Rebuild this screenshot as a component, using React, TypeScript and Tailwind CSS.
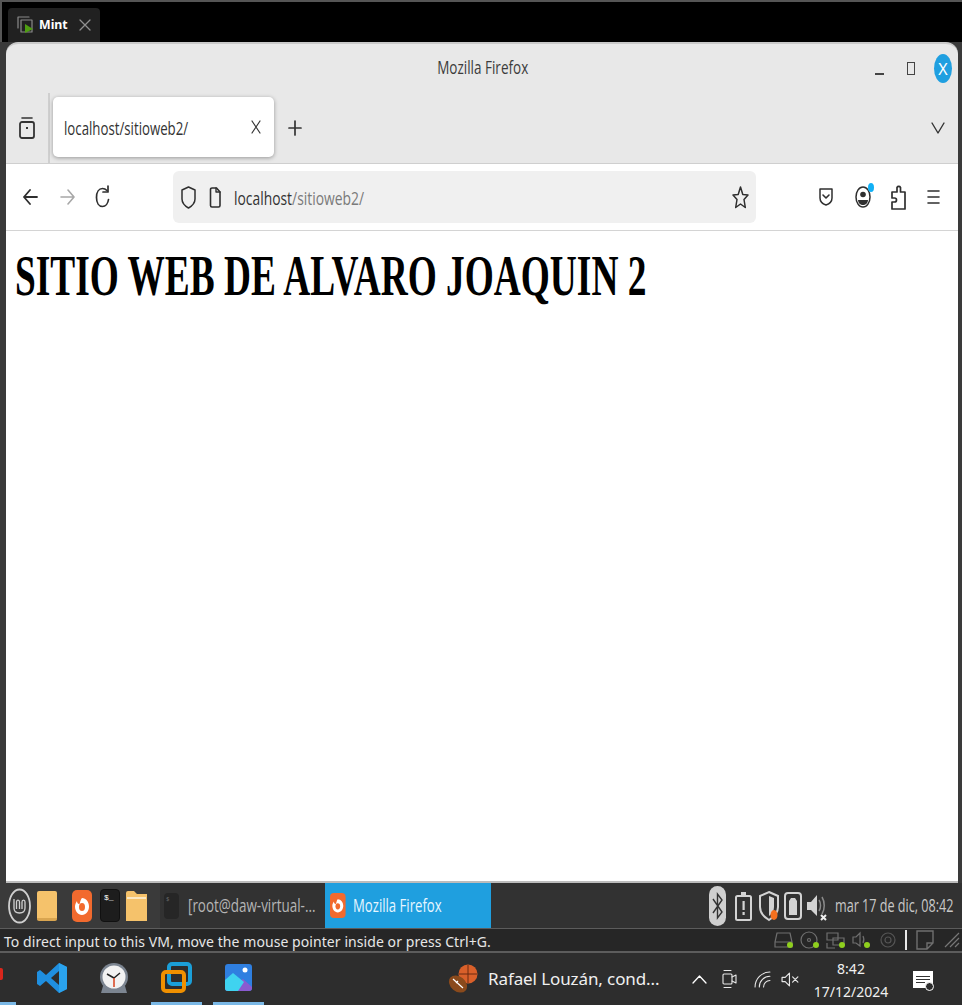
import type { ReactNode } from "react";

const ui = "font-['Open_Sans','Noto_Sans',sans-serif]";

function Icon({ w, h, box, children, className = "" }: { w: number; h: number; box: string; children: ReactNode; className?: string }) {
  return (
    <svg width={w} height={h} viewBox={box} fill="none" stroke="currentColor" strokeWidth="1.6" strokeLinecap="round" strokeLinejoin="round" className={`shrink-0 ${className}`}>
      {children}
    </svg>
  );
}

function TopStrip() {
  return (
    <div className="h-[42px] shrink-0 bg-black border-t-2 border-l-2 border-[#555] pl-[6px] pt-[6px] flex items-start">
      <div className="w-[92px] h-[34px] bg-[#212121] rounded-t-[4px] flex items-center pl-[7px]">
        <Icon w={20} h={20} box="0 0 20 20" className="text-[#8a8a8a]">
          <path d="M3 13V2h11M6 17V5h11v12z" strokeWidth="1.2" />
          <path d="M10 9v9l8-4z" fill="#4f9e12" stroke="none" />
        </Icon>
        <span className="ml-[4px] text-white text-[13px] font-bold font-['Noto_Sans',sans-serif] scale-x-[0.95] origin-left">Mint</span>
        <span className="ml-[9px] text-[#8f8f8f]">
          <Icon w={14} h={14} box="0 0 14 14"><path d="M2 2l10 10M12 2L2 12" strokeWidth="1.3" /></Icon>
        </span>
      </div>
    </div>
  );
}

function TitleBar() {
  return (
    <div className="h-[49px] shrink-0 flex items-center relative">
      <div className={`flex-1 text-center text-[#3c3c3c] text-[18px] pl-[84px] pb-[3px] ${ui}`}>
        <span className="inline-block scale-x-[0.75]">Mozilla Firefox</span>
      </div>
      <div className="flex items-center pr-[6px] text-[#3c3c3c]">
        <div className="w-[9px] h-[2px] bg-[#444] mt-[10px]" />
        <div className="w-[8px] h-[13px] border-[1.5px] border-[#444] ml-[23px]" />
        <div className="w-[18px] h-[29px] rounded-[50%] bg-[#1f9fe0] ml-[19px] flex items-center justify-center text-white text-[16px] font-['Noto_Sans',sans-serif]">X</div>
      </div>
    </div>
  );
}

function TabStrip() {
  return (
    <div className="h-[71px] shrink-0 flex items-center border-b border-[#cfcfcf] text-[#333]">
      <div className="w-[44px] h-full border-r-2 border-[#cfcfcf] flex items-center justify-center">
        <Icon w={18} h={26} box="0 0 18 26" className="ml-[0px]">
          <rect x="2" y="7" width="14" height="16" rx="2" strokeWidth="1.8" />
          <path d="M4 3h10" strokeWidth="1.6" />
          <rect x="8" y="12" width="2" height="2" fill="currentColor" stroke="none" />
        </Icon>
      </div>
      <div className="ml-[3px] w-[221px] h-[60px] -mt-[2px] bg-white rounded-[5px] shadow-[0_1px_4px_rgba(0,0,0,0.35)] flex items-center pl-[11px] pr-[13px] justify-between">
        <span className={`text-[18px] text-[#333] origin-left scale-x-[0.735] whitespace-nowrap pt-[2px] ${ui}`}>localhost/sitioweb2/</span>
        <Icon w={10} h={14} box="0 0 10 14"><path d="M1 1l8 12M9 1L1 13" strokeWidth="1.2" /></Icon>
      </div>
      <span className="ml-[14px]">
        <Icon w={14} h={16} box="0 0 14 16"><path d="M7 1v14M1 8h12" strokeWidth="1.7" /></Icon>
      </span>
      <span className="ml-auto mr-[13px]">
        <Icon w={14} h={12} box="0 0 14 12"><path d="M1 1l6 10 6-10" strokeWidth="1.4" /></Icon>
      </span>
    </div>
  );
}

function NavBar() {
  return (
    <div className="h-[67px] shrink-0 bg-white border-b border-[#d4d4d4] flex items-center text-[#2f2f2f]">
      <span className="ml-[17px]">
        <Icon w={15} h={16} box="0 0 15 16"><path d="M7 1L1 8l6 7M1 8h13" strokeWidth="1.8" /></Icon>
      </span>
      <span className="ml-[22px] text-[#a8a8a8]">
        <Icon w={15} h={16} box="0 0 15 16"><path d="M8 1l6 7-6 7M14 8H1" strokeWidth="1.6" /></Icon>
      </span>
      <span className="ml-[20px]">
        <Icon w={15} h={24} box="0 0 15 24"><path d="M12 5.500C10.500 4 9.500 3.500 7.500 3.500 4 3.500 1.500 7 1.500 12.500s2.500 9 6 9c3 0 5.500-3 6-7" strokeWidth="1.7" /><path d="M13 1v6H8" strokeWidth="1.7" /></Icon>
      </span>
      <div className="ml-[63px] w-[583px] h-[52px] bg-[#f0f0f0] rounded-[6px] flex items-center pl-[8px] pr-[7px]">
        <Icon w={15} h={25} box="0 0 15 25"><path d="M7.500 2L14 5v9c0 4-3 7-6.500 9C4 21 1 18 1 14V5z" strokeWidth="1.5" /></Icon>
        <span className="ml-[13px]">
          <Icon w={12} h={21} box="0 0 12 21"><path d="M1.500 2.500a1.500 1.500 0 011.500-1.500h4.500L11 5v13.500a1.500 1.500 0 01-1.500 1.500H3a1.500 1.500 0 01-1.500-1.500z" strokeWidth="1.6" /><path d="M7 1v4h4" strokeWidth="1.400" /></Icon>
        </span>
        <span className={`ml-[13px] text-[18px] origin-left scale-x-[0.77] whitespace-nowrap pt-[2px] ${ui}`}>
          <span className="text-[#333]">localhost</span>
          <span className="text-[#7a7a7a]">/sitioweb2/</span>
        </span>
        <span className="ml-auto">
          <Icon w={17} h={25} box="0 0 17 25"><path d="M8.500 2l2.300 7.500 5.200.5-4 4.500 1.300 8-4.800-3.500L3.700 22.500l1.300-8-4-4.500 5.200-.5z" strokeWidth="1.500" /></Icon>
        </span>
      </div>
      <span className="ml-[63px]">
        <Icon w={14} h={20} box="0 0 14 20"><path d="M1 2h12v9c0 4-3 6-6 7-3-1-6-3-6-7z" strokeWidth="1.500" /><path d="M4 8l3 3 3-3" strokeWidth="1.600" /></Icon>
      </span>
      <span className="ml-[22px] relative">
        <Icon w={16} h={22} box="0 0 16 22"><ellipse cx="8" cy="11" rx="7" ry="10" strokeWidth="1.500" /><circle cx="8" cy="8.500" r="2.800" fill="currentColor" stroke="none" /><path d="M3 14h10c0 3-2.500 5-5 5s-5-2-5-5z" fill="currentColor" stroke="none" /></Icon>
        <span className="absolute -top-[3px] right-[-3px] w-[6px] h-[9px] rounded-[50%] bg-[#12b0f5]" />
      </span>
      <span className="ml-[20px]">
        <Icon w={15} h={27} box="0 0 15 27"><path d="M5 25h9V8H9.500V3.500a2 2 0 00-3.500 0V8H1v6h2.500a2 2 0 010 4H1v7z" strokeWidth="1.700" /></Icon>
      </span>
      <span className="ml-[21px]">
        <Icon w={13} h={16} box="0 0 13 16"><path d="M1 2h11M1 8h11M1 14h11" strokeWidth="1.600" /></Icon>
      </span>
    </div>
  );
}

function Browser() {
  return (
    <div className="ml-[6px] mr-[4px] flex-1 min-h-0 flex flex-col bg-[#e8e8e8] rounded-t-[12px] border-t-2 border-[#c9c9c9] overflow-hidden">
      <TitleBar />
      <TabStrip />
      <NavBar />
      <div className="flex-1 bg-white border-b-2 border-[#bcbcbc]">
        <h1 className="ml-[9px] mt-[9px] text-[56px] leading-[72px] font-bold text-black font-['Liberation_Serif',serif] origin-left scale-x-[0.667] whitespace-nowrap">SITIO WEB DE ALVARO JOAQUIN 2</h1>
      </div>
    </div>
  );
}

function FirefoxLogo({ size = 1 }: { size?: number }) {
  return (
    <svg width={20 * size} height={32 * size} viewBox="0 0 20 32" className="shrink-0">
      <rect x="0" y="0" width="20" height="32" rx="5" fill="#f26a2e" />
      <path d="M10 8c4 0 7 4 7 8.500S14 25 10 25s-7-4-7-8.500c0-2 1-4 2-5.500 0 2 1 3 2 3 1 1 1-4 3-6z" fill="#fff" />
      <ellipse cx="10" cy="17" rx="3" ry="4" fill="#f26a2e" />
    </svg>
  );
}

function TrayIcons() {
  return (
    <div className="ml-auto flex items-center text-[#d3d3d3] pr-[7px]">
      <svg width="17" height="40" viewBox="0 0 17 40" className="shrink-0">
        <rect width="17" height="40" rx="8.500" fill="#cfcfcf" />
        <path d="M4 13l9 13-4.500 6V8l4.500 6-9 13" fill="none" stroke="#333" strokeWidth="1.400" />
      </svg>
      <svg width="17" height="30" viewBox="0 0 17 30" className="ml-[9px] shrink-0">
        <rect x="1" y="5" width="15" height="24" rx="1.500" fill="none" stroke="#d3d3d3" strokeWidth="2" />
        <rect x="6" y="1" width="5" height="4" fill="#d3d3d3" />
        <rect x="7.500" y="10" width="2.200" height="9" fill="#d3d3d3" />
        <rect x="7.500" y="21" width="2.200" height="3" fill="#d3d3d3" />
      </svg>
      <svg width="20" height="32" viewBox="0 0 20 32" className="ml-[7px] shrink-0">
        <path d="M10 2l9 4v11c0 6-4 10-9 13-5-3-9-7-9-13V6z" fill="none" stroke="#d3d3d3" strokeWidth="2" />
        <path d="M10 6l5 2v9c0 4-2 7-5 9z" fill="#d3d3d3" />
        <ellipse cx="15" cy="25" rx="3.500" ry="5" fill="#f4701f" />
      </svg>
      <svg width="18" height="28" viewBox="0 0 18 28" className="ml-[5px] shrink-0">
        <rect x="1" y="1" width="16" height="26" rx="3" fill="none" stroke="#d3d3d3" strokeWidth="2" />
        <path d="M5 9l2-3h4l2 3v14H5z" fill="#d3d3d3" />
      </svg>
      <svg width="21" height="30" viewBox="0 0 21 30" className="ml-[4px] shrink-0">
        <path d="M1 11h4l6-7v21l-6-6H1z" fill="#d3d3d3" />
        <path d="M13 9c2 3 2 8 0 11M16 6c3 5 3 12 0 17" fill="none" stroke="#8a8a8a" strokeWidth="1.500" />
        <path d="M15 24l5 5M20 24l-5 5" stroke="#eee" strokeWidth="2" />
      </svg>
      <span className={`ml-[8px] text-[18px] w-[120px] origin-left scale-x-[0.7] whitespace-nowrap text-[#c8c8c8] ${ui}`}>mar 17 de dic, 08:42</span>
    </div>
  );
}

function MintPanel() {
  return (
    <div className="h-[45px] shrink-0 bg-[#323232] flex items-center">
      <div className="w-[160px] h-full bg-[#3a3a3a] flex items-center pl-[8px]">
        <svg width="23" height="36" viewBox="0 0 23 36" className="shrink-0">
          <ellipse cx="11.500" cy="18" rx="10.500" ry="16.500" fill="none" stroke="#cfcfcf" strokeWidth="1.800" />
          <path d="M6 11v9c0 3 2 5 5.500 5s5.500-2 5.500-5v-6c0-2.500-3-2.500-3 0v7M11.500 21v-7c0-2.500-3-2.500-3 0v7" fill="none" stroke="#cfcfcf" strokeWidth="1.300" />
        </svg>
        <div className="ml-[6px] w-[20px] h-[30px] rounded-[2px] bg-[#f5c26b] border-b-[3px] border-[#d9a550]" />
        <div className="ml-[15px]"><FirefoxLogo /></div>
        <div className="ml-[8px] w-[20px] h-[33px] rounded-[4px] bg-[#1d1d1d] border border-[#111] text-white text-[8px] pl-[3px] pt-[2px] font-['Liberation_Mono',monospace]">$_</div>
        <svg width="21" height="30" viewBox="0 0 21 30" className="ml-[6px] shrink-0">
          <path d="M0 2a2 2 0 012-2h6l3 3h10v27H0z" fill="#f5c26b" />
          <rect x="1" y="6" width="19" height="2" fill="#fbe7c2" />
        </svg>
      </div>
      <div className="w-[165px] h-full flex items-center pl-[4px]">
        <div className="shrink-0 w-[15px] h-[26px] rounded-[4px] bg-[#262626] text-[#666] text-[6px] pl-[2px] pt-[2px]">$</div>
        <span className={`ml-[9px] text-[18px] origin-left scale-x-[0.745] whitespace-nowrap text-[#b5b5b5] ${ui}`}>[root@daw-virtual-...</span>
      </div>
      <div className="w-[166px] h-full bg-[#1f9fdf] flex items-center pl-[5px]">
        <FirefoxLogo size={0.78} />
        <span className={`ml-[7px] text-[18px] origin-left scale-x-[0.73] whitespace-nowrap text-[#e6f6ff] ${ui}`}>Mozilla Firefox</span>
      </div>
      <TrayIcons />
    </div>
  );
}

function Led({ children, box = "0 0 20 18" }: { children: ReactNode; box?: string }) {
  return (
    <svg width="20" height="18" viewBox={box} fill="none" stroke="#6f6f6f" strokeWidth="1.200" className="shrink-0 ml-[6px]">
      {children}
    </svg>
  );
}

function StatusBar() {
  return (
    <div className="h-[25px] shrink-0 bg-[#262626] border-t border-b-2 border-[#5c5c5c] flex items-center pl-[4px] pr-[2px]">
      <span className="text-[14px] text-[#e6e6e6] whitespace-nowrap font-['Noto_Sans',sans-serif] tracking-[0.07px] pt-[3px]">To direct input to this VM, move the mouse pointer inside or press Ctrl+G.</span>
      <div className="ml-auto flex items-center">
        <Led>
          <path d="M3 2h13l2 9v5H1v-5zM1 11h17" />
          <circle cx="16" cy="14" r="3" fill="#8fcf1e" stroke="none" />
        </Led>
        <Led>
          <circle cx="9" cy="9" r="8" /><circle cx="9" cy="9" r="1.500" />
          <circle cx="16" cy="14" r="3" fill="#8fcf1e" stroke="none" />
        </Led>
        <Led>
          <path d="M1 2h11v7H1zM7 7h11v7H7zM1 12v5h8" />
          <circle cx="16" cy="14" r="3" fill="#8fcf1e" stroke="none" />
        </Led>
        <Led>
          <path d="M1 6h3l4-4v13l-4-3H1zM11 5c1 2 1 5 0 7" />
          <circle cx="15" cy="14" r="3" fill="#8fcf1e" stroke="none" />
        </Led>
        <Led>
          <circle cx="10" cy="9" r="7" stroke="#555" /><circle cx="10" cy="9" r="3" stroke="#555" />
        </Led>
        <div className="ml-[7px] w-[2px] h-[20px] bg-[#e8e8e8]" />
        <svg width="18" height="20" viewBox="0 0 18 20" fill="none" stroke="#6f6f6f" strokeWidth="1.400" className="ml-[9px] shrink-0">
          <path d="M1 1h16v12l-6 6H1zM17 13h-6v6" />
        </svg>
        <svg width="16" height="16" viewBox="0 0 16 16" stroke="#777" strokeWidth="1.200" className="ml-[10px] shrink-0">
          <path d="M15 1L1 15M15 6L6 15M15 11l-4 4" />
        </svg>
      </div>
    </div>
  );
}

function TaskbarSlot({ active, w, children }: { active?: boolean; w: number; children?: ReactNode }) {
  return (
    <div style={{ width: w }} className={`h-full flex items-center justify-center border-b-[3px] ${active ? "border-[#7ab8e6]" : "border-transparent"}`}>
      {children}
    </div>
  );
}

function WinTaskbar() {
  return (
    <div className="flex-1 bg-[#2d2d2d] flex items-center text-white">
      <div className="h-full w-[16px] border-b-[3px] border-[#7ab8e6] overflow-hidden">
        <div className="w-[3px] h-[12px] bg-[#d9261c] mt-[15px] rounded-r-[2px]" />
      </div>
      <TaskbarSlot w={72}>
        <svg width="32" height="32" viewBox="0 0 32 32">
          <path d="M23 1l8 4v22l-8 4-13-12-6 5-3-2v-12l3-2 6 5z" fill="#1f8fe0" />
          <path d="M23 9l-8 7 8 7z" fill="#2d2d2d" />
          <path d="M23 1l8 4v22l-8 4z" fill="#2aa3ee" />
        </svg>
      </TaskbarSlot>
      <TaskbarSlot w={51}>
        <svg width="30" height="32" viewBox="0 0 30 32">
          <path d="M2 31l2-7h22l2 7z" fill="#7c8591" />
          <circle cx="15" cy="15" r="14" fill="#7c8591" />
          <circle cx="15" cy="15" r="11.500" fill="#f2f2f2" />
          <path d="M15 16l-7-4M15 16l6-5" stroke="#222" strokeWidth="1.500" />
          <path d="M15 16v9" stroke="#d8401c" strokeWidth="1.500" />
        </svg>
      </TaskbarSlot>
      <div className="w-[12px]" />
      <TaskbarSlot active w={51}>
        <svg width="31" height="31" viewBox="0 0 31 31" fill="none">
          <rect x="8" y="2" width="21" height="20" rx="3" stroke="#1b9fd8" strokeWidth="4" />
          <rect x="2" y="10" width="21" height="19" rx="3" stroke="#f09000" strokeWidth="4" />
        </svg>
      </TaskbarSlot>
      <div className="w-[11px]" />
      <TaskbarSlot active w={51}>
        <svg width="27" height="27" viewBox="0 0 27 27">
          <rect width="27" height="27" rx="3" fill="#2f7fe0" />
          <path d="M0 20l8-9 7 6 3-2 9 8v1a3 3 0 01-3 3H3a3 3 0 01-3-3z" fill="#8a5bd0" />
          <path d="M0 16l8-7 11 9-6 9H3a3 3 0 01-3-3z" fill="#3fd3f0" />
          <circle cx="20" cy="6" r="2.500" fill="#fff" />
        </svg>
      </TaskbarSlot>
      <div className="ml-[184px] flex items-center">
        <svg width="30" height="30" viewBox="0 0 30 30" className="shrink-0">
          <circle cx="20" cy="10" r="9.500" fill="#d9602a" />
          <path d="M20 1v18M11 10h18" stroke="#6a2a10" strokeWidth="1" />
          <ellipse cx="10" cy="20" rx="10" ry="7.500" transform="rotate(40 10 20)" fill="#8a4a1c" />
          <path d="M5 15l10 9M8 19l2-2" stroke="#fff" strokeWidth="1.200" />
        </svg>
        <span className="ml-[10px] text-[17px] tracking-[-0.1px] text-[#f0f0f0] whitespace-nowrap font-['Noto_Sans',sans-serif] w-[172px]">Rafael Louzán, cond...</span>
      </div>
      <span className="ml-[32px]">
        <Icon w={15} h={9} box="0 0 15 9"><path d="M1 8l6.500-7L14 8" strokeWidth="1.300" /></Icon>
      </span>
      <span className="ml-[15px] text-[#e8e8e8]">
        <Icon w={15} h={22} box="0 0 15 22"><rect x="1" y="6" width="9" height="10" rx="1" strokeWidth="1.100" /><path d="M10 9l4-2v8l-4-2M2 2.500h7M2 19.500h7" strokeWidth="1.100" /></Icon>
      </span>
      <span className="ml-[17px] text-[#e8e8e8]">
        <Icon w={17} h={17} box="0 0 16 16"><path d="M1 15A14 14 0 0115 1M5 15A10 10 0 0115 5M9 15a6 6 0 016-6" strokeWidth="1" /></Icon>
      </span>
      <span className="ml-[10px] text-[#e8e8e8]">
        <Icon w={19} h={15} box="0 0 18 14"><path d="M1 5h3l4-4v12l-4-4H1zM11 4.500l5 5M16 4.500l-5 5" strokeWidth="1.100" /></Icon>
      </span>
      <div className="ml-[12px] w-[78px] text-center text-[14px] leading-[23px] pt-[1px] text-[#f0f0f0] font-['Noto_Sans',sans-serif]">
        <div>8:42</div>
        <div>17/12/2024</div>
      </div>
      <div className="ml-[23px] relative w-[20px] h-[17px] bg-white flex flex-col justify-center gap-[2px] px-[3px]">
        <div className="h-[1px] bg-[#333]" />
        <div className="h-[1px] bg-[#333]" />
        <div className="h-[1px] w-[9px] bg-[#333]" />
        <span className="absolute -bottom-[3px] -right-[1px] w-[9px] h-[9px] rounded-full border border-white bg-[#2d2d2d]" />
      </div>
    </div>
  );
}

export default function App() {
  return (
    <div className="w-[962px] h-[1005px] overflow-hidden flex flex-col bg-black">
      <TopStrip />
      <div className="h-[841px] shrink-0 flex flex-col bg-[#3a3a3a]">
        <Browser />
      </div>
      <MintPanel />
      <StatusBar />
      <WinTaskbar />
    </div>
  );
}
